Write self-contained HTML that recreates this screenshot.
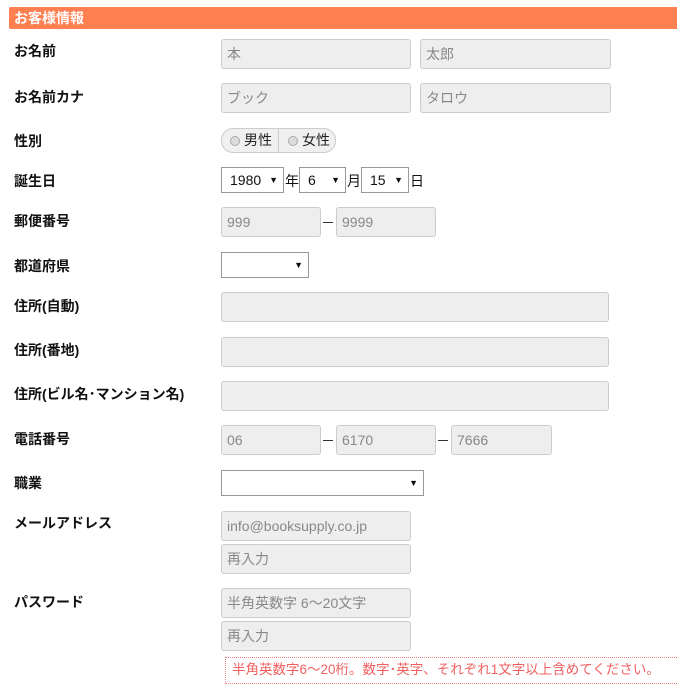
<!DOCTYPE html>
<html><head><meta charset="utf-8"><style>
body{margin:0;width:677px;height:692px;background:#fff;position:relative;overflow:hidden;font-family:"Liberation Sans","Noto Sans CJK JP",sans-serif;font-size:14px;color:#333}
.a{position:absolute;box-sizing:border-box}
.h{left:9px;top:7px;width:668px;height:22px;background:#ff7f50;color:#fff;font-weight:bold;font-size:14px;line-height:22px;padding-left:5px;border-radius:2px 0 0 2px}
.l{left:14px;font-weight:bold;font-size:14px;color:#111}
.i{background:#eee;border:1px solid #ccc;border-radius:3px;height:30px;line-height:28px;padding-left:5px;color:#888;font-size:14px}
.s{background:#fff;border:1px solid #999;height:26px;line-height:24px;padding-left:8px;color:#111;font-size:14px}
.s:after{content:"▼";position:absolute;right:5px;font-size:9px;top:0}
.t{font-size:14px;color:#111}
</style></head><body>
<div class="a h">お客様情報</div>
<div class="a l" style="top:41px">お名前</div>
<div class="a i" style="left:221px;top:39px;width:190px">本</div>
<div class="a i" style="left:420px;top:39px;width:191px">太郎</div>
<div class="a l" style="top:87px">お名前カナ</div>
<div class="a i" style="left:221px;top:83px;width:190px">ブック</div>
<div class="a i" style="left:420px;top:83px;width:191px">タロウ</div>
<div class="a l" style="top:131px">性別</div>
<div class="a" style="left:221px;top:128px;width:115px;height:25px;border:1px solid #ccc;border-radius:12px;background:#f0f0f0;font-size:14px;line-height:23px;color:#222">
<span style="position:absolute;left:8px;top:7px;width:8px;height:8px;border:1px solid #aaa;border-radius:50%;background:#ddd"></span>
<span style="position:absolute;left:22px">男性</span>
<span style="position:absolute;left:56px;top:0;height:23px;border-left:1px solid #ccc"></span>
<span style="position:absolute;left:66px;top:7px;width:8px;height:8px;border:1px solid #aaa;border-radius:50%;background:#ddd"></span>
<span style="position:absolute;left:80px">女性</span></div>
<div class="a l" style="top:171px">誕生日</div>
<div class="a s" style="left:221px;top:167px;width:63px">1980</div>
<div class="a t" style="left:285px;top:171px">年</div>
<div class="a s" style="left:299px;top:167px;width:47px">6</div>
<div class="a t" style="left:347px;top:171px">月</div>
<div class="a s" style="left:361px;top:167px;width:48px">15</div>
<div class="a t" style="left:410px;top:171px">日</div>
<div class="a l" style="top:211px">郵便番号</div>
<div class="a t" style="left:322px;top:213px;width:14px;height:30px"><span style="position:absolute;left:1px;top:9px;width:10px;border-top:1px solid #333"></span></div>
<div class="a i" style="left:221px;top:207px;width:100px">999</div>
<div class="a i" style="left:336px;top:207px;width:100px">9999</div>
<div class="a l" style="top:256px">都道府県</div>
<div class="a s" style="left:221px;top:252px;width:88px"></div>
<div class="a l" style="top:296px">住所(自動)</div>
<div class="a i" style="left:221px;top:292px;width:388px"></div>
<div class="a l" style="top:340px">住所(番地)</div>
<div class="a i" style="left:221px;top:337px;width:388px"></div>
<div class="a l" style="top:384px">住所(ビル名･マンション名)</div>
<div class="a i" style="left:221px;top:381px;width:388px"></div>
<div class="a l" style="top:429px">電話番号</div>
<div class="a i" style="left:221px;top:425px;width:100px">06</div>
<div class="a t" style="left:322px;top:431px;width:14px;height:20px"><span style="position:absolute;left:1px;top:9px;width:10px;border-top:1px solid #333"></span></div>
<div class="a i" style="left:336px;top:425px;width:100px">6170</div>
<div class="a t" style="left:437px;top:431px;width:14px;height:20px"><span style="position:absolute;left:1px;top:9px;width:10px;border-top:1px solid #333"></span></div>
<div class="a i" style="left:451px;top:425px;width:101px">7666</div>
<div class="a l" style="top:473px">職業</div>
<div class="a s" style="left:221px;top:470px;width:203px"></div>
<div class="a l" style="top:513px">メールアドレス</div>
<div class="a i" style="left:221px;top:511px;width:190px">info@booksupply.co.jp</div>
<div class="a i" style="left:221px;top:544px;width:190px">再入力</div>
<div class="a l" style="top:592px">パスワード</div>
<div class="a i" style="left:221px;top:588px;width:190px">半角英数字 6〜20文字</div>
<div class="a i" style="left:221px;top:621px;width:190px">再入力</div>
<div class="a" style="left:225px;top:657px;width:460px;height:27px;border:1px dotted #f08080;color:#f06060;font-size:13.5px;line-height:24px;padding-left:6px">半角英数字6〜20桁。数字･英字、それぞれ1文字以上含めてください。</div>
</body></html>
